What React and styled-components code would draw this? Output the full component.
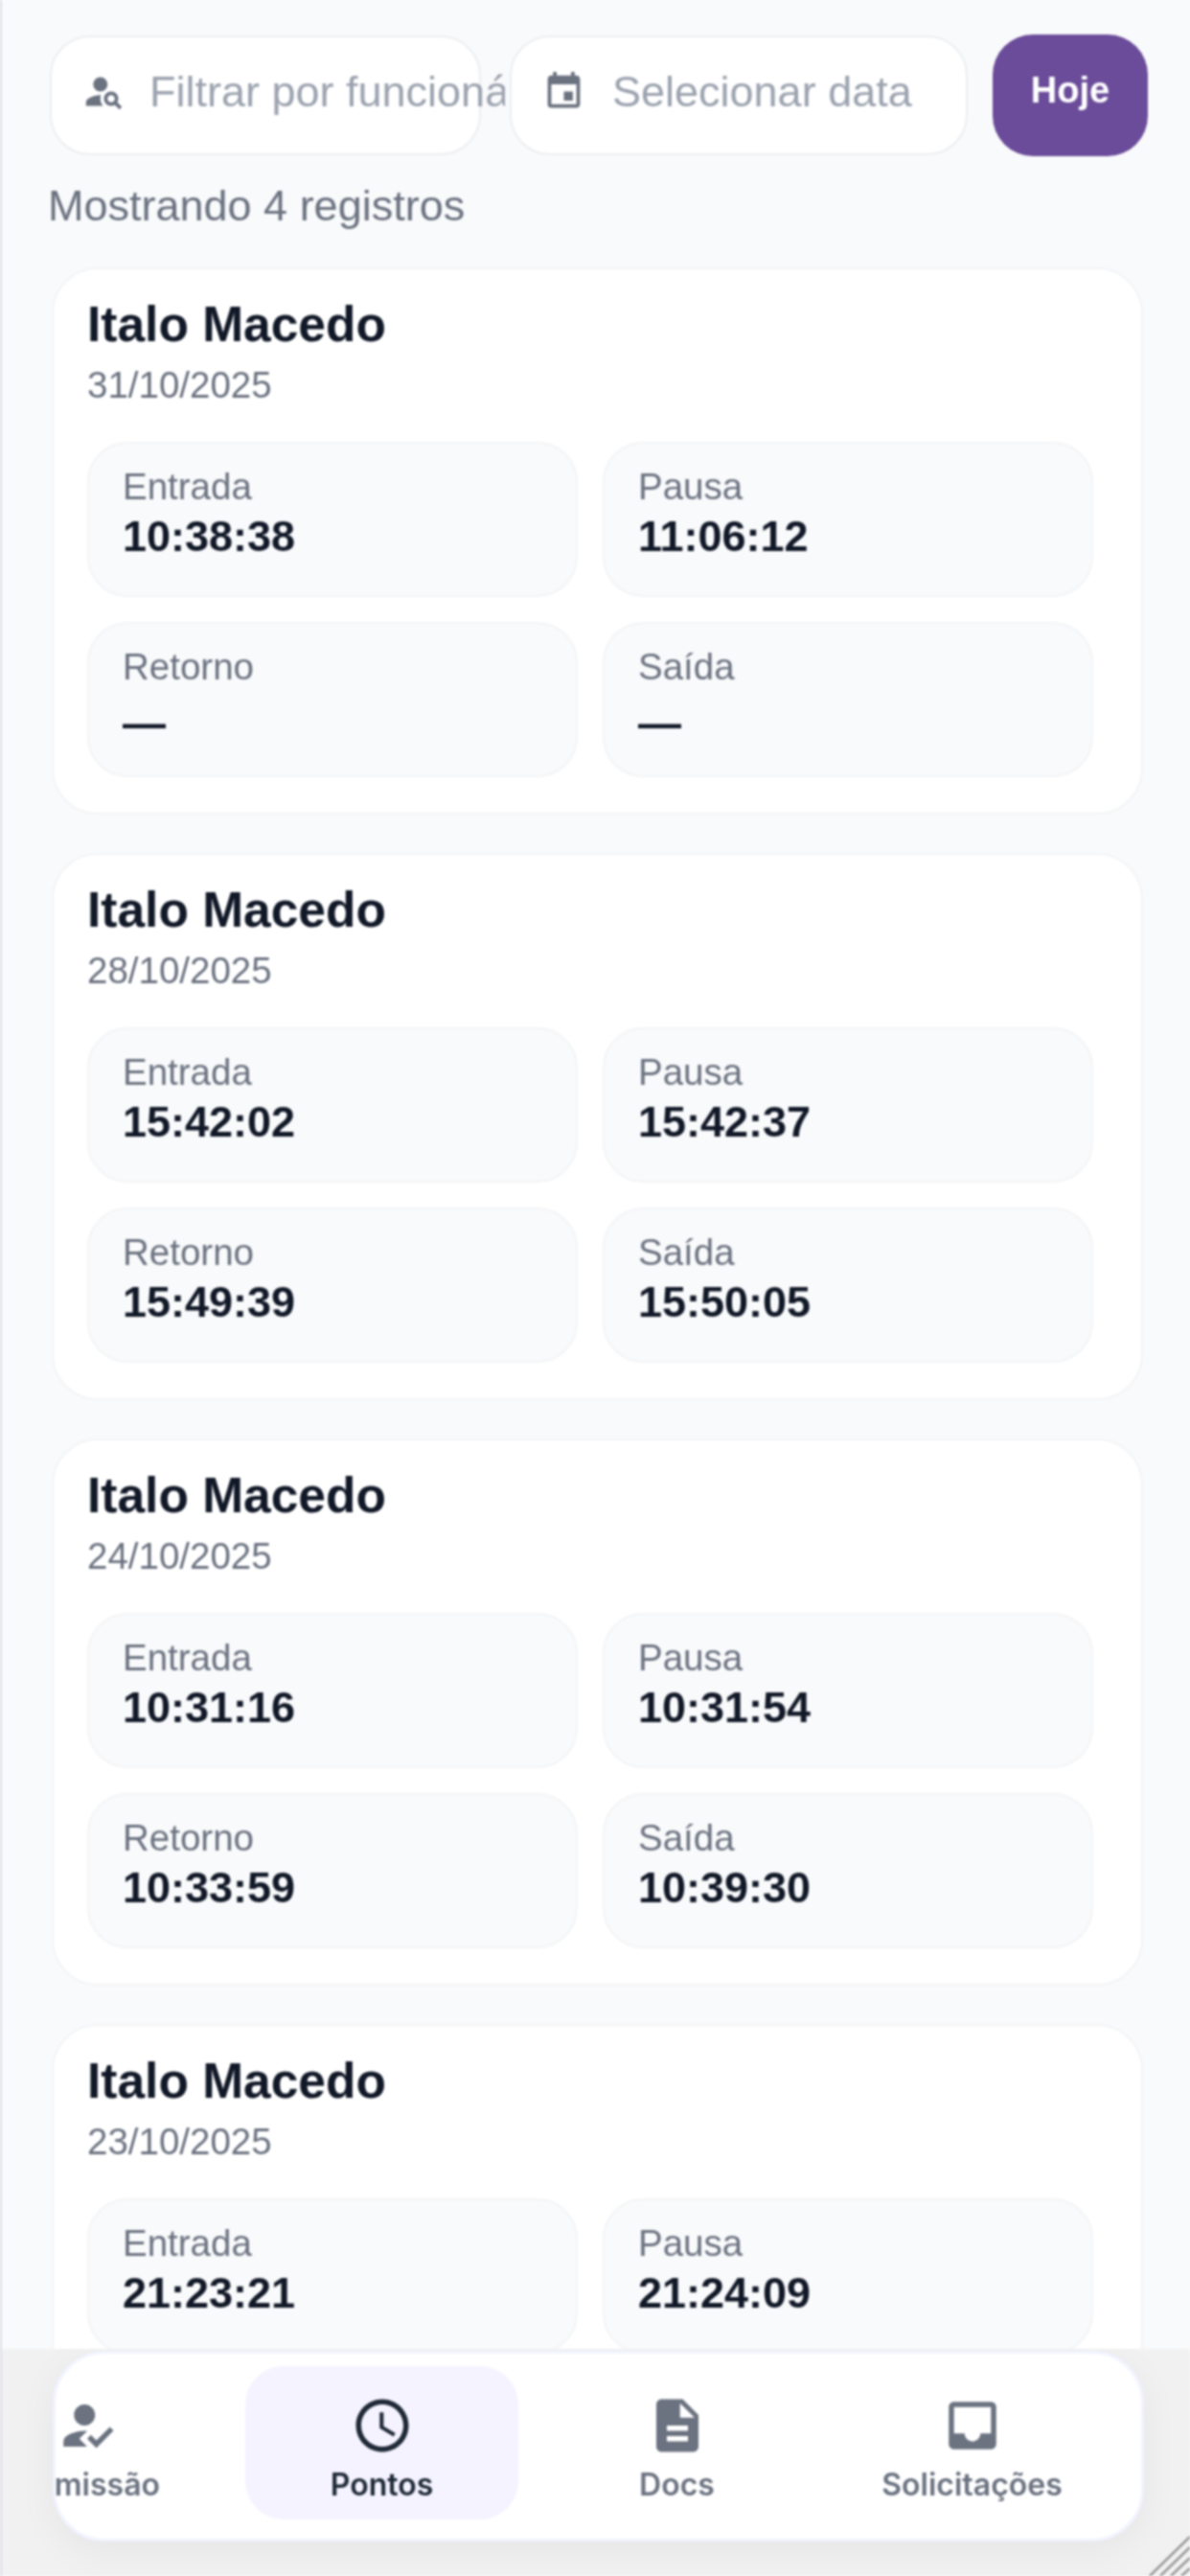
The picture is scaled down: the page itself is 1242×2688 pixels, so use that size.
import styled, { createGlobalStyle } from "styled-components";
import { MdPersonSearch, MdEvent, MdHowToReg, MdAccessTime, MdDescription, MdInbox } from "react-icons/md";

const GlobalStyle = createGlobalStyle`
  html, body {
    margin: 0;
    padding: 0;
    background: #f9fafb;
  }
  * {
    box-sizing: border-box;
  }
`;

const Shell = styled.div`
  position: relative;
  width: 1242px;
  height: 2688px;
  overflow: hidden;
  background: #f9fafb;
  border-left: 2px solid #dcdfe4;
  font-family: "Liberation Sans", Arial, sans-serif;
  filter: blur(0.9px);
`;

const Content = styled.main`
  padding: 36px 0 0 48px;
`;

const Toolbar = styled.div`
  display: flex;
  align-items: center;
  gap: 30px;
  margin: 0 45px 0 2px;
`;

const SearchBox = styled.div`
  flex: 0 0 ${props => props.$width}px;
  min-width: 0;
  height: 125px;
  display: flex;
  align-items: center;
  gap: ${props => props.$iconGap}px;
  padding: 0 0 8px 32px;
  background: #fff;
  border: 2px solid #eceef1;
  border-radius: 42px;
  color: #6b7280;
  position: relative;

  svg {
    flex: 0 0 auto;
  }
`;

const Placeholder = styled.span`
  display: block;
  flex: 0 0 auto;
  max-width: 371px;
  overflow: hidden;
  white-space: nowrap;
  font-size: 45px;
  line-height: 54px;
  color: #9ca3af;
`;

const TodayButton = styled.button`
  flex: 0 0 162px;
  height: 127px;
  margin-left: -4px;
  padding: 0 0 10px;
  border: 0;
  border-radius: 42px;
  background: #6b4c9a;
  color: #fff;
  font-family: inherit;
  font-size: 38px;
  font-weight: 700;
`;

const Count = styled.p`
  margin: 25px 0 37px;
  font-size: 45px;
  line-height: 54px;
  color: #6b7280;
`;

const CardList = styled.div`
  display: flex;
  flex-direction: column;
  gap: 40px;
  margin: 0 49px 0 4px;
`;

const Card = styled.article`
  min-height: 571px;
  padding: 27px 50px 36px 35px;
  background: #fff;
  border: 2px solid #f3f4f6;
  border-radius: 48px;
`;

const Name = styled.h2`
  margin: 0;
  font-size: 51.5px;
  line-height: 61px;
  font-weight: 700;
  color: #111827;
`;

const DateText = styled.div`
  margin-top: 9px;
  font-size: 38.5px;
  line-height: 47px;
  color: #6b7280;
`;

const TileGrid = styled.div`
  display: grid;
  grid-template-columns: 1fr 1fr;
  gap: 26px;
  margin-top: 36px;
`;

const Tile = styled.div`
  height: 162px;
  padding: 21px 0 0 35px;
  background: #f9fafb;
  border: 2px solid #f3f4f6;
  border-radius: 42px;
`;

const TileLabel = styled.div`
  font-size: 38.5px;
  line-height: 47px;
  color: #6b7280;
`;

const TileValue = styled.div`
  margin-top: ${props => (props.$empty ? 9 : 2)}px;
  font-size: 45px;
  line-height: 54px;
  font-weight: 700;
  color: #111827;
`;

const Dock = styled.div`
  position: absolute;
  left: 0;
  right: 0;
  bottom: 0;
  height: 237px;
  padding: 2px 48px 0 53px;
  overflow: hidden;
  background: #f1f1f1;
`;

const Nav = styled.nav`
  height: 199px;
  overflow: hidden;
  background: #fff;
  border: 3px solid #f1f3ff;
  border-radius: 54px;
  box-shadow: 0 10px 40px rgba(0, 0, 0, 0.05);
`;

const NavTrack = styled.div`
  display: flex;
  gap: 23px;
  margin: 13px 0 0 -110px;
`;

const NavItem = styled.div`
  flex: 0 0 285px;
  height: 160px;
  display: flex;
  flex-direction: column;
  align-items: center;
  padding-top: 29px;
  gap: 9px;
  border-radius: 40px;
  background: ${props => (props.$active ? "#f5f3ff" : "transparent")};
  color: ${props => (props.$active ? "#1f2937" : "#6b7280")};
`;

const NavLabel = styled.span`
  font-family: Inter, "Liberation Sans", sans-serif;
  font-size: 32px;
  line-height: 40px;
  font-weight: 600;
`;

const ResizeGrip = styled.svg`
  position: absolute;
  right: 0;
  bottom: 0;
  width: 44px;
  height: 44px;
`;

const records = [
  { date: "31/10/2025", times: ["10:38:38", "11:06:12", "—", "—"] },
  { date: "28/10/2025", times: ["15:42:02", "15:42:37", "15:49:39", "15:50:05"] },
  { date: "24/10/2025", times: ["10:31:16", "10:31:54", "10:33:59", "10:39:30"] },
  { date: "23/10/2025", times: ["21:23:21", "21:24:09"] },
];

const labels = ["Entrada", "Pausa", "Retorno", "Saída"];

const tabs = [
  { label: "Admissão", icon: MdHowToReg },
  { label: "Pontos", icon: MdAccessTime, active: true },
  { label: "Docs", icon: MdDescription },
  { label: "Solicitações", icon: MdInbox },
];

export default function App() {
  return (
    <>
      <GlobalStyle />
      <Shell>
        <Content>
          <Toolbar>
            <SearchBox $width={450} $iconGap={25}>
              <MdPersonSearch size={45} />
              <Placeholder>Filtrar por funcionário</Placeholder>
            </SearchBox>
            <SearchBox $width={478} $iconGap={28}>
              <MdEvent size={45} />
              <Placeholder>Selecionar data</Placeholder>
            </SearchBox>
            <TodayButton>Hoje</TodayButton>
          </Toolbar>
          <Count>Mostrando 4 registros</Count>
          <CardList>
            {records.map(record => (
              <Card key={record.date}>
                <Name>Italo Macedo</Name>
                <DateText>{record.date}</DateText>
                <TileGrid>
                  {record.times.map((time, i) => (
                    <Tile key={labels[i]}>
                      <TileLabel>{labels[i]}</TileLabel>
                      <TileValue $empty={time === "—"}>{time}</TileValue>
                    </Tile>
                  ))}
                </TileGrid>
              </Card>
            ))}
          </CardList>
        </Content>
        <Dock>
          <Nav>
            <NavTrack>
              {tabs.map(({ label, icon: Icon, active }) => (
                <NavItem key={label} $active={active}>
                  <Icon size={66} />
                  <NavLabel>{label}</NavLabel>
                </NavItem>
              ))}
            </NavTrack>
          </Nav>
          <ResizeGrip viewBox="0 0 44 44">
            <g stroke="#9a9a9a" strokeWidth="2.5">
              <line x1="2" y1="44" x2="44" y2="3" />
              <line x1="13" y1="44" x2="44" y2="14" />
              <line x1="24" y1="44" x2="44" y2="25" />
              <line x1="35" y1="44" x2="44" y2="36" />
            </g>
          </ResizeGrip>
        </Dock>
      </Shell>
    </>
  );
}
